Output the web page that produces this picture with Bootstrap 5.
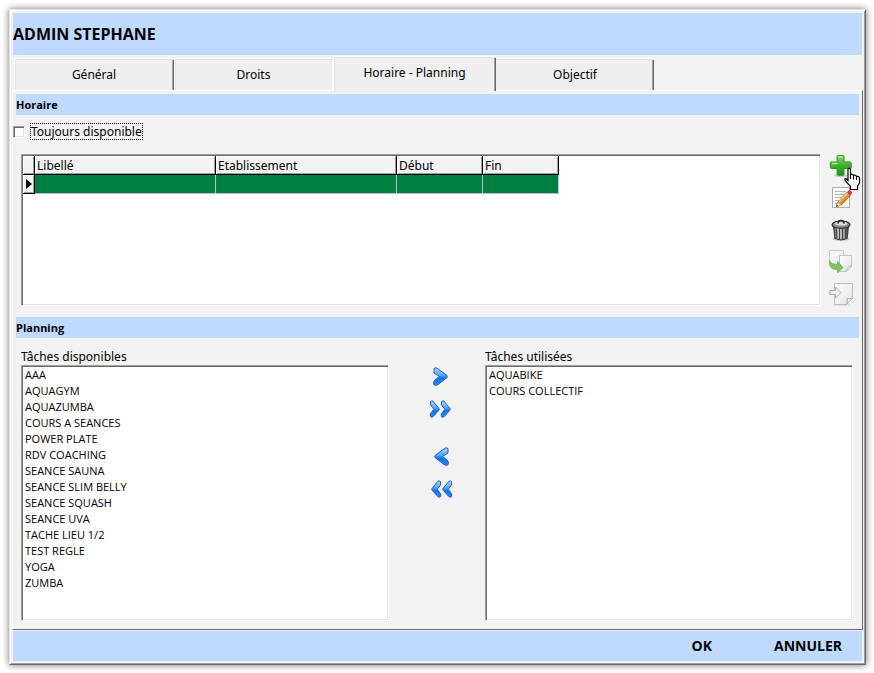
<!DOCTYPE html>
<html lang="fr">
<head>
<meta charset="utf-8">
<meta name="viewport" content="width=device-width, initial-scale=1">
<title>ADMIN STEPHANE</title>
<link href="https://cdn.jsdelivr.net/npm/bootstrap@5.3.0/dist/css/bootstrap.min.css" rel="stylesheet">
<style>
:root{--face:#f2f2f2;--bar:#bedaff;--dark:#696969;--mid:#a0a0a0;--soft:#e3e3e3}
body{font:12px/16px "Noto Sans","Open Sans",sans-serif;color:#000;background:#fff;padding:9px 8px 8px 9px;min-height:100vh}
button{font:inherit;color:inherit}
.win{background:var(--face);border:1px solid;border-color:var(--soft) var(--dark) var(--dark) var(--soft);box-shadow:inset 1px 1px #fff,inset -1px -1px var(--mid),0 0 7px rgba(0,0,0,.55);padding:3px 2px 3px 2px}
.titlebar{background:var(--bar);height:42px;margin:0 1px;font:bold 16px/42px "Open Sans",sans-serif}
.tabs{height:35px;padding-left:2px}
.tab-item{width:160px;height:32px;background:#efefef;border:0;padding:2px 0 0;box-shadow:inset 1px 1px #fff,inset 2px 2px var(--soft),inset -1px 0 var(--dark),inset -2px 0 var(--mid)}
.tab-item.current{width:163px;height:35px;margin-bottom:-1px;padding:1px 0 2px;position:relative}
.tab-item.covered{width:159px;box-shadow:inset 1px 1px #fff,inset 2px 2px var(--soft),inset -1px 0 #fff}
.tab-item.final{width:158px;box-shadow:inset 0 1px #fff,inset 0 2px var(--soft),inset -1px 0 var(--dark),inset -2px 0 var(--mid)}
.panel{border:1px solid;border-color:#fff var(--dark) var(--dark) #fff;padding-top:3px}
.section-bar{background:var(--bar);margin:0 3px;height:21px;font:bold 11px/21px "Open Sans",sans-serif}
.section-bar.second{margin-top:11px}
.sunken{background:#fff;border:1px solid;border-color:var(--mid) #fff #fff var(--mid);box-shadow:inset 1px 1px var(--dark),inset -1px -1px var(--soft);padding:1px}
.always{gap:5px;margin:8px 0 14px}
.always input{appearance:none;width:12px;height:12px;margin:0;background:#fff;border:1px solid;border-color:var(--mid) #fff #fff var(--mid);box-shadow:inset 1px 1px var(--dark),inset -1px -1px var(--soft)}
.always label{border:1px dotted #000;line-height:15px}
.content-x{padding:0 9px 0 8px}
.grid-box{min-height:152px}
.grid{border-collapse:separate;border-spacing:0;table-layout:fixed;width:536px}
.grid th{height:19px;padding:0 2px;font-weight:400;line-height:17px;background:var(--face);border:solid #000;border-width:0 1px 1px 0;box-shadow:inset 1px 1px #fff,inset -1px -1px var(--mid)}
.grid td{height:19px;padding:0;background:#008040;border:solid silver;border-width:0 1px 1px 0}
.grid .mark-cell{background:var(--face);border-color:#000;box-shadow:inset 1px 1px #fff,inset -1px -1px var(--mid)}
.mark-cell svg{margin-left:3px}
.grid .c-mark{width:12px}.grid .c-wide{width:181px}.grid .c-start{width:86px}.grid .c-end{width:76px}
.icon-btn{width:24px;height:24px;padding:0;border:0;background:none;line-height:0}
.icon-btn svg,.pointer{display:block}
.pointer{position:absolute;left:15px;top:13px;pointer-events:none;z-index:2}
.lists{padding-top:10px;padding-bottom:8px}
.lists label{line-height:17px}
.list{font:11px/16px "Open Sans",sans-serif;color:#000;border-radius:0;outline:0;overflow-y:auto}
.list option{padding:0 2px;height:16px}
.moves{width:96px;padding:17px 0 0 8px;gap:8px}
.moves .back{margin-top:16px}
.footbar{background:var(--bar);height:30px;margin:1px 1px 0;padding-right:20px;gap:62px}
.footbar button{border:0;background:none;padding:0;font:bold 14px/30px "Open Sans",sans-serif}
</style>
<script src="https://cdn.jsdelivr.net/npm/bootstrap@5.3.0/dist/js/bootstrap.bundle.min.js"></script>
</head>
<body class="d-flex flex-column">
<svg width="0" height="0" class="position-absolute" aria-hidden="true">
  <defs>
    <linearGradient id="blue" x1="0" y1="0" x2="0" y2="1"><stop offset="0" stop-color="#a8dcff"/><stop offset=".45" stop-color="#48a4ff"/><stop offset=".6" stop-color="#0874ff"/><stop offset="1" stop-color="#268cff"/></linearGradient>
    <linearGradient id="green" x1="0" y1="0" x2="0" y2="1"><stop offset="0" stop-color="#8bdc65"/><stop offset=".5" stop-color="#42ae2c"/><stop offset="1" stop-color="#219321"/></linearGradient>
    <linearGradient id="metal"><stop offset="0" stop-color="#555"/><stop offset=".35" stop-color="#c8c8c8"/><stop offset="1" stop-color="#444"/></linearGradient>
    <linearGradient id="paper" x1="0" y1="0" x2="1" y2="1"><stop offset="0" stop-color="#fff"/><stop offset="1" stop-color="#e2e2e2"/></linearGradient>
    <path id="chev" d="M2 2.5 Q4 .8 6 2.8 L15 9.5 Q16 10.5 15 11.5 L6 18.5 Q4 20 2 18.8 L1.6 16 Q2 14 7.5 10.5 L2 7Z" fill="url(#blue)" stroke="#2b5cb8" stroke-width="1"/>
    <path id="chev2" d="M1.5 2.5 Q3 1 4.3 2.5 L10 9.5 Q10.6 10.3 10 11 L4.3 17.5 Q2.5 19 1.3 17.5 V15 L4.8 10.3 L1.5 6Z" fill="url(#blue)" stroke="#2b5cb8" stroke-width="1"/>
  </defs>
</svg>
<main class="win d-flex flex-column flex-grow-1">
  <h1 class="titlebar">ADMIN STEPHANE</h1>
  <div class="tabs d-flex align-items-end" role="tablist">
    <button type="button" class="tab-item" role="tab">Général</button>
    <button type="button" class="tab-item covered" role="tab">Droits</button>
    <button type="button" class="tab-item current" role="tab" aria-selected="true">Horaire - Planning</button>
    <button type="button" class="tab-item final" role="tab">Objectif</button>
  </div>
  <section class="panel d-flex flex-column flex-grow-1">
    <h2 class="section-bar">Horaire</h2>
    <div class="always d-flex align-items-center"><input type="checkbox" id="always"><label for="always">Toujours disponible</label></div>
    <div class="content-x d-flex gap-2">
      <div class="sunken grid-box flex-grow-1">
        <table class="grid">
          <thead><tr><th class="c-mark"></th><th class="c-wide">Libellé</th><th class="c-wide">Etablissement</th><th class="c-start">Début</th><th class="c-end">Fin</th></tr></thead>
          <tbody><tr><td class="mark-cell"><svg width="6" height="10" class="d-block" viewBox="0 0 6 10"><path d="M0 0 6 5 0 10Z"/></svg></td><td></td><td></td><td></td><td></td></tr></tbody>
        </table>
      </div>
      <div class="d-flex flex-column gap-2">
        <div class="d-flex position-relative">
          <button type="button" class="icon-btn" aria-label="Ajouter"><svg width="24" height="24" viewBox="0 0 24 24"><ellipse cx="12" cy="21.5" rx="7" ry="1.6" fill="#ccc"/><path d="M9.3 1.5H14q1 0 1 1V8h6q1.2 0 1.2 1v4.5q0 1-1.2 1h-6V20q0 1.3-1 1.3H9.3q-1.2 0-1.2-1.3v-5.5H2.5q-1.2 0-1.2-1V9q0-1 1.2-1h5.6V2.500q0-1 1.200-1Z" fill="url(#green)" stroke="#2c922a"/><path d="M9.300 3H13.500M3 9.500H8.500" stroke="#b4ed95" stroke-width="1.500"/></svg></button>
          <svg class="pointer" width="18" height="24" viewBox="0 0 18 24"><path d="M4.500 1.500Q6.500.500 6.500 3V7.500Q8.500 6.500 9.500 8.500 11.500 7.500 12.500 9.500 15.500 8.500 15.500 12V16L13.500 19V22.500H6.500V19.500L1.500 14Q0 11.500 2 11.500L4 13.500V3Q4 1.800 4.500 1.500Z" fill="#fff" stroke="#000" stroke-width="1.200"/><path d="M6.500 7V12M9.500 8.500V12.500M12.500 9.500V13" stroke="#000"/></svg>
        </div>
        <button type="button" class="icon-btn" aria-label="Modifier"><svg width="24" height="24" viewBox="0 0 24 24"><path d="M3.500 1.500H20.500V21.500H3.500Z" fill="#fafafa" stroke="#aaa"/><path d="M6 5.500H17M6 8.500H15M6 11.500H13M6 14.500H10M6 17.500H9" stroke="#b5b5b5"/><path d="M8.500 16.500 18 6.200 21.500 9.300 12 19 7.300 20.500Z" fill="#f28b25" stroke="#9b4a15" stroke-width=".8"/><path d="M10 16 19 6.700" stroke="#ffd28a" stroke-width="1.400"/><path d="M8.500 16.500 12 19 7.300 20.500Z" fill="#f4d4a5"/><path d="M7.800 18.700 9.300 20 7 20.800Z" fill="#222"/><path d="M18 6.200 20 4Q22.500 4.200 23.300 6.800L21.500 9.300Z" fill="#c94040"/></svg></button>
        <button type="button" class="icon-btn" aria-label="Supprimer"><svg width="24" height="24" viewBox="0 0 24 24"><ellipse cx="12" cy="21" rx="9" ry="2" fill="#d0d0d0"/><path d="M4.500 8H19.500L18.200 20.500Q12 23.500 5.800 20.500Z" fill="url(#metal)" stroke="#333"/><path d="M7.500 11 8 20M10.500 11V21M13.500 11V21M16.500 11 16 20" stroke="#444" stroke-width="1.300"/><path d="M9 10.500 9.300 20.500M12 11V21M15 11V20.500" stroke="#ddd" stroke-width=".8"/><ellipse cx="12" cy="6.700" rx="9" ry="3.700" fill="#8b8b8b" stroke="#303030" stroke-width="1.200"/><ellipse cx="12" cy="5.600" rx="6.500" ry="2" fill="#dcdcdc"/><path d="M9 5.500Q9 2.500 12 2.500T15 5.500" fill="none" stroke="#222" stroke-width="1.600"/></svg></button>
        <button type="button" class="icon-btn" aria-label="Copier"><svg width="24" height="24" viewBox="0 0 24 24"><path d="M.5.500H14.500V15.500H.5Z" fill="url(#paper)" stroke="#c8c8c8"/><path d="M10.500 5.500H22.500V16L17 21.500H10.500Z" fill="url(#paper)" stroke="#c2c2c2"/><path d="M22.500 16Q18 15.500 17 21.500Z" fill="#fff" stroke="#bbb"/><path d="M.5 10.500Q2 14.500 8.500 14.500V11.500L14 17.500 8.500 23V19.500Q-.5 20 .5 10.500Z" fill="#86bf68" stroke="#74ad58" stroke-width=".8"/></svg></button>
        <button type="button" class="icon-btn" aria-label="Coller"><svg width="24" height="24" viewBox="0 0 24 24"><ellipse cx="13" cy="23" rx="9" ry="1" fill="#ddd"/><path d="M5.500 1.500H23.500V16L17.500 22.500H5.500Z" fill="url(#paper)" stroke="#bdbdbd"/><path d="M23.500 16Q19 17.500 18 16.500 19 20 17.500 22.500Z" fill="#fff" stroke="#aaa"/><path d="M.8 8.500H6.500V5L12 10.500 6.500 16V12.500H.8Z" fill="#f4f4f4" stroke="#aaa"/></svg></button>
      </div>
    </div>
    <h2 class="section-bar second mb-0">Planning</h2>
    <div class="lists content-x d-flex flex-grow-1">
      <div class="d-flex flex-column flex-fill w-50">
        <label for="available">Tâches disponibles</label>
        <select id="available" class="list sunken w-100 flex-grow-1" size="15" multiple>
          <option>AAA</option><option>AQUAGYM</option><option>AQUAZUMBA</option><option>COURS A SEANCES</option><option>POWER PLATE</option><option>RDV COACHING</option><option>SEANCE SAUNA</option><option>SEANCE SLIM BELLY</option><option>SEANCE SQUASH</option><option>SEANCE UVA</option><option>TACHE LIEU 1/2</option><option>TEST REGLE</option><option>YOGA</option><option>ZUMBA</option>
        </select>
      </div>
      <div class="moves d-flex flex-column align-items-center flex-shrink-0">
        <button type="button" class="icon-btn" aria-label="Ajouter la tâche"><svg width="24" height="24" viewBox="0 0 24 24"><use href="#chev" x="3" y="1"/></svg></button>
        <button type="button" class="icon-btn" aria-label="Ajouter toutes les tâches"><svg width="24" height="24" viewBox="0 0 24 24"><use href="#chev2" x="0" y="2"/><use href="#chev2" x="11" y="2"/></svg></button>
        <button type="button" class="icon-btn back" aria-label="Retirer la tâche"><svg width="24" height="24" viewBox="0 0 24 24"><g transform="matrix(-1 0 0 1 24 0)"><use href="#chev" x="3" y="1"/></g></svg></button>
        <button type="button" class="icon-btn" aria-label="Retirer toutes les tâches"><svg width="24" height="24" viewBox="0 0 24 24"><g transform="matrix(-1 0 0 1 24 0)"><use href="#chev2" x="0" y="2"/><use href="#chev2" x="11" y="2"/></g></svg></button>
      </div>
      <div class="d-flex flex-column flex-fill w-50">
        <label for="used">Tâches utilisées</label>
        <select id="used" class="list sunken w-100 flex-grow-1" size="15" multiple><option>AQUABIKE</option><option>COURS COLLECTIF</option></select>
      </div>
    </div>
  </section>
  <footer class="footbar d-flex justify-content-end"><button type="button">OK</button><button type="button">ANNULER</button></footer>
</main>
</body>
</html>
